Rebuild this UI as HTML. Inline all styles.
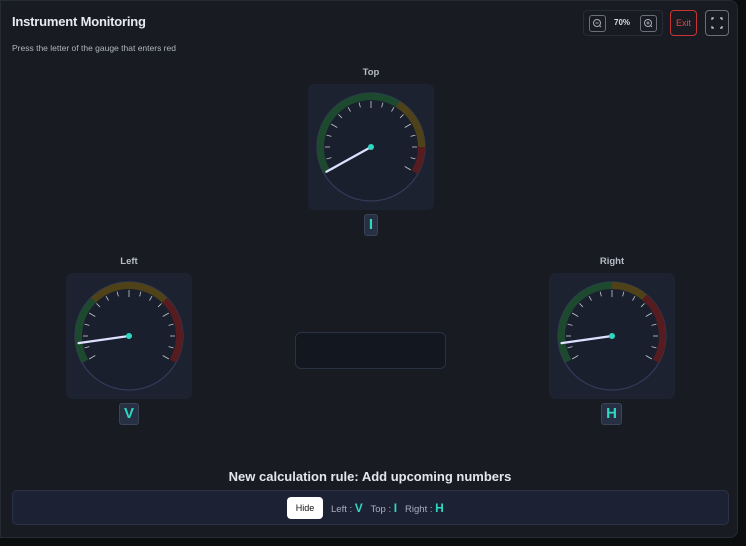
<!DOCTYPE html>
<html><head><meta charset="utf-8"><style>
*{box-sizing:border-box;margin:0;padding:0}
body{width:746px;height:546px;background:#0c0d0f;font-family:"Liberation Sans",sans-serif;position:relative;overflow:hidden;color:#e6e8ee}
#p{position:absolute;left:0;top:0;width:738px;height:538px;background:#181b22;border:1px solid #262a33;border-radius:0 8px 8px 0}
.abs{position:absolute}
h1{position:absolute;left:11px;top:13px;font-size:13px;font-weight:bold;color:#e8eaf0;letter-spacing:-0.2px}
.sub{left:11px;top:42px;font-size:8.5px;color:#b0b4be}
.zc{left:582px;top:9px;width:80px;height:26px;border:1px solid #272c38;border-radius:4px}
.zb{position:absolute;top:4px;width:17px;height:17px;border:1px solid #6a6f7a;border-radius:3px}
.exit{left:669px;top:9px;width:27px;height:26px;border:1px solid #c83434;border-radius:4px;color:#e04848;font-size:9px;text-align:center;line-height:24px}
.fs{left:704px;top:9px;width:24px;height:26px;border:1px solid #6a6f7a;border-radius:4px}
.lbl{font-size:9.5px;font-weight:bold;color:#b8bcc6;text-align:center;width:126px}
.gb{width:126px;height:126px;background:#1d2231;border-radius:6px}
.lt{background:#273042;border:1px solid #3a4458;border-radius:3px;color:#2ed8c0;font-weight:bold;text-align:center}
</style></head><body>
<div id="p">
<h1>Instrument Monitoring</h1>
<div class="abs sub">Press the letter of the gauge that enters red</div>
<div class="abs zc">
 <div class="zb" style="left:5px"><svg width="15" height="15" viewBox="0 0 15 15"><circle cx="7" cy="7" r="3.5" fill="none" stroke="#aab" stroke-width="1"/><line x1="5.5" y1="7" x2="8.5" y2="7" stroke="#aab"/><line x1="9.5" y1="9.5" x2="11" y2="11" stroke="#aab"/></svg></div>
 <div style="position:absolute;left:30px;top:7px;font-size:8px;font-weight:bold;color:#dde">70%</div>
 <div class="zb" style="left:56px"><svg width="15" height="15" viewBox="0 0 15 15"><circle cx="7" cy="7" r="3.5" fill="none" stroke="#aab" stroke-width="1"/><line x1="5.5" y1="7" x2="8.5" y2="7" stroke="#aab"/><line x1="7" y1="5.5" x2="7" y2="8.5" stroke="#aab"/><line x1="9.5" y1="9.5" x2="11" y2="11" stroke="#aab"/></svg></div>
</div>
<div class="abs exit">Exit</div>
<div class="abs fs"><svg width="22" height="24" viewBox="0 0 22 24"><path d="M6 9V7h2M14 7h2v2M16 15v2h-2M8 17H6v-2" fill="none" stroke="#ccd" stroke-width="1.2"/></svg></div>

<div class="abs lbl" style="left:307px;top:66px">Top</div>
<div class="abs gb" style="left:307px;top:83px"><svg id="g1" width="126" height="126"></svg></div>
<div class="abs lt" style="left:363px;top:213px;width:14px;height:22px;font-size:15px;line-height:20px">I</div>

<div class="abs lbl" style="left:65px;top:255px">Left</div>
<div class="abs gb" style="left:65px;top:272px"><svg id="g2" width="126" height="126"></svg></div>
<div class="abs lt" style="left:118px;top:402px;width:20px;height:22px;font-size:15px;line-height:20px">V</div>

<div class="abs lbl" style="left:548px;top:255px">Right</div>
<div class="abs gb" style="left:548px;top:272px"><svg id="g3" width="126" height="126"></svg></div>
<div class="abs lt" style="left:600px;top:402px;width:21px;height:22px;font-size:15px;line-height:20px">H</div>

<div class="abs" style="left:294px;top:331px;width:151px;height:37px;background:#131720;border:1px solid #2a3142;border-radius:6px"></div>

<div class="abs" style="left:0;width:738px;top:468px;text-align:center;font-size:13px;font-weight:bold;color:#e4e6ec">New calculation rule: Add upcoming numbers</div>
<div class="abs" style="left:11px;top:489px;width:717px;height:35px;background:#1c2133;border:1px solid #2b3245;border-radius:5px">
 <div style="position:absolute;left:274px;top:6px;width:36px;height:22px;background:#fff;border-radius:4px;color:#111;font-size:9px;text-align:center;line-height:22px">Hide</div>
 <div style="position:absolute;left:318px;top:10px;font-size:9.5px;color:#aab0bc;white-space:nowrap">Left : <b style="color:#2ed8c0;font-size:12px">V</b>&nbsp;&nbsp; Top : <b style="color:#2ed8c0;font-size:12px">I</b>&nbsp;&nbsp; Right : <b style="color:#2ed8c0;font-size:12px">H</b></div>
</div>
</div>
<script>
function pt(cx,cy,r,a){a=a*Math.PI/180;return [cx+r*Math.sin(a),cy-r*Math.cos(a)];}
function arc(cx,cy,r,a1,a2,col){var p=pt(cx,cy,r,a1),q=pt(cx,cy,r,a2);return '<path d="M'+p[0].toFixed(2)+' '+p[1].toFixed(2)+'A'+r+' '+r+' 0 '+((a2-a1)>180?1:0)+' 1 '+q[0].toFixed(2)+' '+q[1].toFixed(2)+'" fill="none" stroke="'+col+'" stroke-width="7"/>';}
function g(id,y1,y2,nd){var cx=63,cy=63,s='';
s+='<circle cx="63" cy="63" r="54" fill="#1a1f2e" stroke="#333b58" stroke-width="1.2"/>';
s+=arc(cx,cy,50.5,-120,y1,'#1d4a2e')+arc(cx,cy,50.5,y1,y2,'#4f4219')+arc(cx,cy,50.5,y2,120,'#561c1f');
for(var i=0;i<=16;i++){var a=-120+i*15,l=(i%4==0)?7:5;var p=pt(cx,cy,46,a),q=pt(cx,cy,46-l,a);
s+='<line x1="'+p[0].toFixed(2)+'" y1="'+p[1].toFixed(2)+'" x2="'+q[0].toFixed(2)+'" y2="'+q[1].toFixed(2)+'" stroke="#c8cad0" stroke-width="0.8"/>';}
var e=pt(cx,cy,51,nd);s+='<line x1="63" y1="63" x2="'+e[0].toFixed(2)+'" y2="'+e[1].toFixed(2)+'" stroke="#dde0ff" stroke-width="2.2" stroke-linecap="round"/>';
s+='<circle cx="63" cy="63" r="3" fill="#2ed8c0"/>';
document.getElementById(id).innerHTML=s;}
g('g1',32,90,-119);g('g2',-45,45,-98);g('g3',0,40,-98);
</script>
</body></html>
